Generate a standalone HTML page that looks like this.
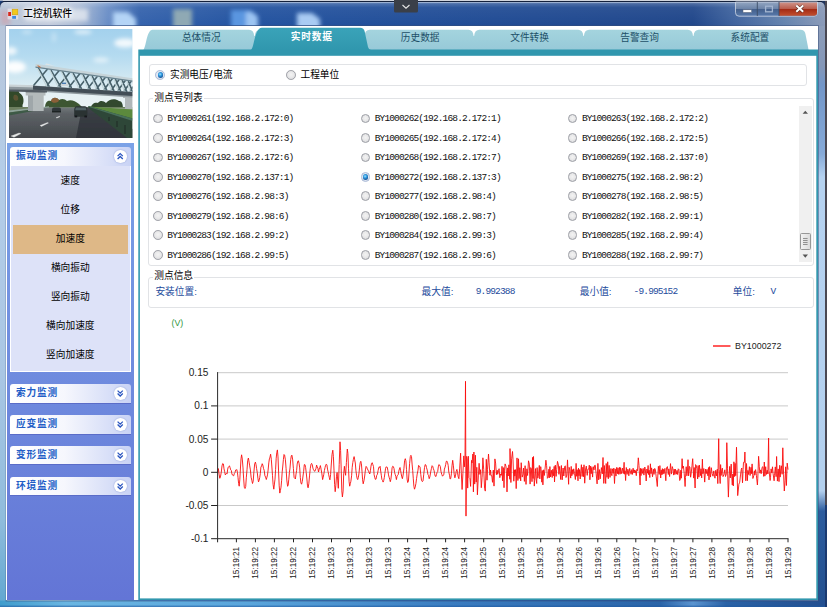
<!DOCTYPE html>
<html lang="zh"><head><meta charset="utf-8"><title>工控机软件</title>
<style>
html,body{margin:0;padding:0}
body{width:827px;height:607px;overflow:hidden;position:relative;background:#3d6aa8;font-family:"Liberation Sans","Noto Sans CJK SC",sans-serif;font-size:9.7px;color:#000}
.abs,.abs-c>*{position:absolute}
div{position:absolute}
#client{left:6px;top:26px;width:812px;height:574px;background:#fff}
#title{left:23.3px;top:7.2px;font-size:9.75px;line-height:13px;color:#000;font-family:"Liberation Sans","Noto Sans CJK SC",sans-serif;font-weight:500;white-space:nowrap;text-shadow:0 0 3px #fff,0 0 5px #fff,0 0 7px #fff}
#side{left:.5px;top:117.4px;width:127.5px;height:456.6px;background:linear-gradient(#7ba2e7,#6375d6)}
.gh{font-family:"Liberation Sans","Noto Sans CJK SC",sans-serif;left:3.3px;width:121px;height:18.6px;border-radius:3px 3px 0 0;background:linear-gradient(90deg,#fff 0%,#f6f7fd 45%,#c9d3f5 100%);color:#215dc6;font-weight:bold;letter-spacing:.8px;line-height:18.5px;text-indent:6.3px;box-sizing:border-box;white-space:nowrap}
.gb{left:3.3px;width:121px;background:#dde2f8;box-sizing:border-box;border:1px solid #fff;border-top:none}
.it{left:0;width:119px;text-align:center;line-height:12px;height:12px;white-space:nowrap}
.chev{right:4.2px;top:3.2px;width:12.4px;height:12.4px;border-radius:50%;background:#fff;box-shadow:0 0 1.5px #7d90d0}
.chev svg{position:absolute;left:0;top:0}
.rd{width:9.8px;height:9.8px;border-radius:50%;box-sizing:border-box;border:1px solid #9c9ea5;background:radial-gradient(circle at 50% 45%,#f3f3f3 0%,#e9e9ea 45%,#d2d3d6 100%)}
.rd.on{border-color:#a9b9d6;background:radial-gradient(circle at 50% 45%,#e6eef8 0%,#dfe6f2 60%,#cfd8ea 100%)}
.rd.on::after{content:"";position:absolute;left:1.2px;top:1.2px;width:5.4px;height:5.4px;border-radius:50%;background:radial-gradient(circle at 42% 38%,#9fe0fb 0%,#2f9ae0 35%,#1a62a8 65%,#163f78 100%)}
.rl{font-family:"Liberation Mono","WenQuanYi Zen Hei",monospace;font-size:9.5px;letter-spacing:-.85px;line-height:12px;height:12px;white-space:pre;color:#111}
.tx{line-height:12px;height:12px;white-space:nowrap}
.gbx{border:1px solid #e1e3e6;border-radius:3px;box-sizing:border-box}
.lbl{background:#fff;line-height:11px;height:11px;padding:0 1px;white-space:nowrap}
.bl{color:#1d4b9c}
.num{font-family:"Liberation Mono",monospace;font-size:9.5px;letter-spacing:-.85px}
.tab{line-height:12px;height:12px;width:60px;text-align:center;color:#1d5068;white-space:nowrap}
</style></head><body>
<svg style="position:absolute;left:0;top:0" width="827" height="607" viewBox="0 0 827 607">
<defs>
<linearGradient id="tb" x1="0" x2="1" y1="0" y2="0">
<stop offset="0" stop-color="#b4c2d6"/><stop offset=".06" stop-color="#c3ccdc"/><stop offset=".095" stop-color="#a9bad4"/><stop offset=".13" stop-color="#6a8ec6"/><stop offset=".17" stop-color="#3462ac"/><stop offset=".3" stop-color="#2353a0"/><stop offset=".6" stop-color="#204b94"/><stop offset=".84" stop-color="#20468a"/><stop offset=".89" stop-color="#3f639e"/><stop offset=".95" stop-color="#6483ae"/><stop offset="1" stop-color="#8a9ab8"/>
</linearGradient>
<linearGradient id="tbv" x1="0" x2="0" y1="0" y2="1"><stop offset="0" stop-color="#fff" stop-opacity=".28"/><stop offset=".25" stop-color="#fff" stop-opacity=".06"/><stop offset="1" stop-color="#fff" stop-opacity="0"/></linearGradient>
<linearGradient id="lf" x1="0" x2="0" y1="0" y2="1">
<stop offset="0" stop-color="#b8c6da"/><stop offset=".25" stop-color="#b4cde8"/><stop offset=".6" stop-color="#a9c6e4"/><stop offset=".85" stop-color="#8fbcdc"/><stop offset="1" stop-color="#5fa6d0"/>
</linearGradient>
<linearGradient id="rf" x1="0" x2="0" y1="0" y2="1">
<stop offset="0" stop-color="#8d9db9"/><stop offset=".07" stop-color="#8497b8"/><stop offset=".1" stop-color="#7296c8"/><stop offset=".22" stop-color="#86aad8"/><stop offset=".26" stop-color="#b5d2f0"/><stop offset=".8" stop-color="#b3d0ee"/><stop offset=".835" stop-color="#2c5c9e"/><stop offset="1" stop-color="#23508f"/>
</linearGradient>
<linearGradient id="bf" x1="0" x2="1" y1="0" y2="0">
<stop offset="0" stop-color="#3f9ccc"/><stop offset=".08" stop-color="#6ab6e2"/><stop offset=".3" stop-color="#5aa6dc"/><stop offset=".55" stop-color="#3a7cc0"/><stop offset=".8" stop-color="#2a64a8"/><stop offset=".84" stop-color="#5a94d0"/><stop offset=".88" stop-color="#2a62a6"/><stop offset="1" stop-color="#234f90"/>
</linearGradient>
<filter id="b3" x="-50%" y="-50%" width="200%" height="200%"><feGaussianBlur stdDeviation="2"/></filter>
<clipPath id="tbc"><rect x="0" y="2" width="827" height="23.5"/></clipPath>
</defs>
<rect x="0" y="0" width="827" height="607" fill="#20345c"/>
<path d="M0 607V8Q0 1.5 7 1.5H818Q825 1.5 825 8V607Z" fill="url(#tb)"/>
<path d="M0 26V8Q0 1.5 7 1.5H818Q825 1.5 825 8V26Z" fill="url(#tbv)"/>
<rect x="0" y="26" width="6.4" height="581" fill="url(#lf)"/>
<rect x="818" y="26" width="7" height="581" fill="url(#rf)"/>
<rect x="0" y="600.6" width="825" height="6.4" fill="url(#bf)"/>
<rect x="0" y="605.6" width="825" height="1.4" fill="#1f5aa0" opacity=".55"/>
<rect x="825" y="0" width="2" height="505" fill="#4a4852"/>
<rect x="825" y="505" width="2" height="102" fill="#1b3a70"/>
<g filter="url(#b3)" clip-path="url(#tbc)">
<path d="M113 30V12H128L136 19V30Z" fill="#b4d4f6"/>
<rect x="173" y="9" width="19" height="22" fill="#8fa9b4"/>
<path d="M231 30V10H250L258 16V30Z" fill="#5a96e0"/>
<path d="M246 30V12H252L258 17V30Z" fill="#9cc4f2"/>
<path d="M297 30V13H312L320 19V30Z" fill="#a9cbf3"/>
<rect x="26" y="9" width="62" height="12" fill="#e4e8f0" opacity=".8"/>
<rect x="1" y="11" width="9" height="14" fill="#d49aa4" opacity=".55"/>
</g>
<path d="M7 2.6H818" stroke="#dfe8f4" stroke-width="1" opacity=".55"/>
<path d="M3 1.3H822" stroke="#14213c" stroke-width="1.2"/>
<rect x="0" y="0" width="827" height=".8" fill="#fff"/>
<path d="M0 .8H3Q.8 1.8 0 4.5Z" fill="#1d3f7a"/>
<rect x="6.1" y="25.6" width="812.3" height="575.4" fill="none" stroke="#3a4f7a" stroke-width=".9" opacity=".6"/>
<!-- top dropdown notch -->
<path d="M394 0H418V11Q418 12.5 416.5 12.5H395.5Q394 12.5 394 11Z" fill="#3a3f48"/>
<path d="M402.5 5L406 8.2L409.5 5" fill="none" stroke="#e8e8e8" stroke-width="1.1"/>
<!-- caption buttons -->
<g>
<defs><linearGradient id="cb" x1="0" x2="0" y1="0" y2="1"><stop offset="0" stop-color="#93a6c2"/><stop offset=".48" stop-color="#6c84a8"/><stop offset=".52" stop-color="#44608c"/><stop offset="1" stop-color="#587aac"/></linearGradient>
<linearGradient id="cr" x1="0" x2="0" y1="0" y2="1"><stop offset="0" stop-color="#cf9388"/><stop offset=".48" stop-color="#b95c4c"/><stop offset=".52" stop-color="#a32b15"/><stop offset="1" stop-color="#c25030"/></linearGradient></defs>
<path d="M735.5 2H817.5V12.7Q817.5 16.2 814 16.2H739Q735.5 16.2 735.5 12.7Z" fill="url(#cb)" stroke="#cfd8e6" stroke-width=".8"/>
<path d="M779 2.4H817V12.7Q817 15.7 814 15.7H779Z" fill="url(#cr)"/>
<path d="M757.3 2V16M779 2V16" stroke="#3c4d68" stroke-width=".9"/>
<rect x="743" y="9.8" width="8.6" height="2.6" fill="#fff" stroke="#5a6478" stroke-width=".5"/>
<rect x="765.6" y="6.2" width="6.8" height="5.6" fill="none" stroke="#a3b5d0" stroke-width="1.3"/>
<path d="M796.3 5.6L803.2 11.8M803.2 5.6L796.3 11.8" stroke="#5a2a20" stroke-width="3.2"/>
<path d="M796.3 5.6L803.2 11.8M803.2 5.6L796.3 11.8" stroke="#fff" stroke-width="2"/>
</g>
<!-- app icon -->
<g>
<rect x="7.6" y="8.6" width="10.6" height="10.8" fill="#e8e4ea" opacity=".75"/>
<rect x="8.2" y="12" width="2.8" height="4" fill="#d8281c"/>
<rect x="12.2" y="9.2" width="5.6" height="5.6" fill="#f2c81c" stroke="#caa010" stroke-width=".6"/>
<rect x="12.2" y="16" width="3.8" height="2.8" fill="#3f8ae0"/>
</g>
</svg>
<div id="title">工控机软件</div>
<div id="client">
<svg style="position:absolute;left:3px;top:3.4px" width="123.6" height="108.9" viewBox="0 0 123.6 108.9">
<defs>
<linearGradient id="sky" x1="0" x2="0" y1="0" y2="1"><stop offset="0" stop-color="#a3d1ed"/><stop offset=".25" stop-color="#b5dbf0"/><stop offset=".45" stop-color="#d1e8f2"/><stop offset=".6" stop-color="#e6f1f4"/><stop offset="1" stop-color="#eef4f4"/></linearGradient>
<linearGradient id="road" x1="0" x2="0" y1="0" y2="1"><stop offset="0" stop-color="#70777a"/><stop offset=".2" stop-color="#5d6266"/><stop offset="1" stop-color="#45494e"/></linearGradient>
<filter id="pb"><feGaussianBlur stdDeviation="2.2"/></filter>
<filter id="ps"><feGaussianBlur stdDeviation=".5"/></filter>
<clipPath id="pc"><rect x="0" y="0" width="123.6" height="108.9"/></clipPath>
</defs>
<g clip-path="url(#pc)">
<rect width="123.6" height="108.9" fill="url(#sky)"/>
<g filter="url(#pb)" fill="#fff">
<ellipse cx="6" cy="38" rx="11" ry="6" opacity=".95"/>
<ellipse cx="2" cy="22" rx="6" ry="4" opacity=".8"/>
<ellipse cx="116" cy="14" rx="11" ry="4.5" opacity=".85"/>
<ellipse cx="92" cy="31" rx="8" ry="2.5" opacity=".6"/>
<ellipse cx="74" cy="3" rx="9" ry="2" opacity=".7"/>
<ellipse cx="45" cy="8" rx="2" ry="5" opacity=".35"/>
<ellipse cx="18" cy="3" rx="5" ry="1.5" opacity=".5"/>
</g>
<g filter="url(#ps)">
<path d="M36 79C36 72 40 71 42 72C43 68 48 68 50 71C53 69 56 70 58 72C62 70 66 72 70 75L74 79Z" fill="#3d5733"/>
<path d="M42 72C43 68 48 68 50 71C50 74 44 75 42 72Z" fill="#a4623a" opacity=".75"/>
<path d="M82 79C82 75 86 73 89 74C91 71 95 72 97 74C100 70 106 69 110 72C113 72 114 75 114 80H82Z" fill="#31492f"/>
<path d="M0 61C4 57.5 9 59.5 10.5 64C14.5 66 15.5 72 13.5 76C14.5 80 10 84 0 84Z" fill="#314a2b"/>
<path d="M5 66C8 65 10 68 9 71C6 73 3 70 5 66Z" fill="#7a5a38" opacity=".6"/>
<path d="M0 78H123.6V90H0Z" fill="#6d8060"/>
<path d="M80 78.6L123.6 79.4V82L90 79.6Z" fill="#a3aaa3"/>
<path d="M79.4 77.4L123.6 80.4V91L88 80Z" fill="#5b8a3c"/>
<path d="M0 84L40 78.5H79.4L123.6 100V108.9H0Z" fill="url(#road)"/>
<path d="M73 78.5H79.4L123.6 100V108.9H67Z" fill="#23262e" opacity=".62"/>
<path d="M79.4 77L123.6 89.4V108.9H118L79.4 79Z" fill="#2f4638"/>
<path d="M79.4 77L123.6 89.4V92L79.4 77.8Z" fill="#47705a"/>
<path d="M100 88V92M108 92V98M116 96V105" stroke="#1f2e28" stroke-width="1.2"/>
<path d="M0 81.5L40 77.2V78.4L0 83.6Z" fill="#8ea39a"/>
<path d="M0 83.6L30 79.6V81L0 86.4Z" fill="#3e5a46"/>
<path d="M31 96.5L38.5 93.5L39.5 94L32.5 97.5Z M47 88.6L50.5 87.3L51 87.7L47.8 89.1Z M2 107L10 104L12 104.6L5 108.3Z" fill="#e6e8e8" stroke="#e6e8e8" stroke-width=".3"/>
<path d="M16.7 62H36.5V66.6H34.7V82H19V66.6H16.7Z" fill="#b3babb"/>
<path d="M19 66.6H24V82H19Z" fill="#9fa7aa"/>
<path d="M16.7 61.5H36.5V63.4H16.7Z" fill="#656e74"/>
<path d="M114 65H123.6V80H116V69H114Z" fill="#b0b7b9"/>
<path d="M114 65H123.6V67H114Z" fill="#5c656b"/>
<path d="M0 56.2L28 56.8L123.6 63V68.4L28 62.4L0 61.6Z" fill="#8f999e"/>
<path d="M0 55.6L28 56.2V58.4L0 57.8Z" fill="#c9d2d5"/>
<path d="M24 56.8L123.6 63V67L24 60.8Z" fill="#434e56"/>
<path d="M0 60.4L28 60.8L38 61.6V63.6L0 62.6Z" fill="#535c64"/>
<path d="M25.0 56.1L39.0 39.4M29.0 38.4L40.0 57.1M37.5 56.9L50.6 41.1M41.5 40.3L51.6 57.8M49.1 57.7L61.3 42.7M53.1 42.0L62.3 58.5M59.8 58.4L71.2 44.2M63.8 43.6L72.2 59.2M69.7 59.0L80.3 45.5M73.7 45.1L81.3 59.8M78.8 59.6L88.8 46.8M82.8 46.4L89.8 60.4M87.3 60.2L96.6 48.0M91.3 47.7L97.6 60.9M95.1 60.7L103.8 49.1M99.1 48.8L104.8 61.4M102.3 61.2L110.5 50.1M106.3 49.9L111.5 61.8M109.0 61.6L116.7 51.0M113.0 50.9L117.7 62.2M115.2 62.0L122.5 51.8M119.2 51.8L123.5 62.6M121.0 62.4L127.8 52.6M125.0 52.7L128.8 62.9M126.3 62.8L132.7 53.4M130.3 53.5L133.7 63.3" fill="none" stroke="#48626c" stroke-width="1.6" stroke-linecap="round"/>
<path d="M27.5 37.7L37.5 56.9M40.0 39.5L49.1 57.7M51.6 41.3L59.8 58.4M62.3 42.9L69.7 59.0M72.2 44.3L78.8 59.6M81.3 45.7L87.3 60.2M89.8 47.0L95.1 60.7M97.6 48.1L102.3 61.2M104.8 49.2L109.0 61.6M111.5 50.2L115.2 62.0M117.7 51.1L121.0 62.4M123.5 52.0L126.3 62.8M128.8 52.8L131.2 63.1" fill="none" stroke="#c4d6da" stroke-width="1.2" stroke-linecap="round"/>
<path d="M26.5 34.8L123.6 49.2V52.6L26.5 38.4Z" fill="#c6d4d9"/>
<path d="M26.5 37.4L123.6 51.6V52.8L26.5 38.8Z" fill="#67828e"/>
<path d="M36 35.4L46 37L37.5 34.6Z" fill="#e2e4e4"/>
<path d="M28.6 36.6L31.6 38.4" stroke="#c86a3a" stroke-width="1.1"/>
<rect x="52" y="54.6" width="7" height="2.4" fill="#cfd5d9"/>
<rect x="53" y="53.6" width="4" height="1.4" fill="#4a7ab0"/>
<path d="M65.2 81Q65.2 77.4 67.8 77.2H75.8Q78.2 77.4 78.4 81V86.4Q78.4 87.8 77 87.8H66.6Q65.2 87.8 65.2 86.4Z" fill="#2a3233"/>
<path d="M66.8 78.4H76.8L77.4 81.2H66.2Z" fill="#4f6164"/>
<rect x="65.6" y="86.6" width="2.6" height="1.8" fill="#13171a"/><rect x="75.4" y="86.6" width="2.6" height="1.8" fill="#13171a"/>
<path d="M43 80.4Q43 78.6 45 78.6H50Q52 78.6 52 80.4V82.6H43Z" fill="#2e3638"/>
<rect x="43" y="82.2" width="9" height="1.2" fill="#15191b"/>
</g>
</g>
</svg>
<div id="side">
<div class="gh" style="top:3.6px">振动监测<div class="chev"><svg width="12.4" height="12.4" viewBox="0 0 12.4 12.4"><path d="M3.6 6.1L6.2 3.6L8.8 6.1M3.6 9L6.2 6.5L8.8 9" fill="none" stroke="#2a55c0" stroke-width="1.3"/></svg></div></div>
<div class="gb" style="top:22.2px;height:206.0px">
<div style="left:2px;top:59.2px;width:115px;height:28.8px;background:#deb887"></div>
<div class="it" style="top:9.2px">速度</div>
<div class="it" style="top:38.3px">位移</div>
<div class="it" style="top:67.3px">加速度</div>
<div class="it" style="top:96.4px">横向振动</div>
<div class="it" style="top:125.5px">竖向振动</div>
<div class="it" style="top:154.5px">横向加速度</div>
<div class="it" style="top:183.6px">竖向加速度</div>
</div>
<div class="gh" style="top:240.8px;border-radius:3px 3px 0 0;box-shadow:0 1px 0 #5a6cc8">索力监测<div class="chev"><svg width="12.4" height="12.4" viewBox="0 0 12.4 12.4"><path d="M3.6 3.6L6.2 6.1L8.8 3.6M3.6 6.5L6.2 9L8.8 6.5" fill="none" stroke="#2a55c0" stroke-width="1.3"/></svg></div></div>
<div class="gh" style="top:271.7px;border-radius:3px 3px 0 0;box-shadow:0 1px 0 #5a6cc8">应变监测<div class="chev"><svg width="12.4" height="12.4" viewBox="0 0 12.4 12.4"><path d="M3.6 3.6L6.2 6.1L8.8 3.6M3.6 6.5L6.2 9L8.8 6.5" fill="none" stroke="#2a55c0" stroke-width="1.3"/></svg></div></div>
<div class="gh" style="top:302.5px;border-radius:3px 3px 0 0;box-shadow:0 1px 0 #5a6cc8">变形监测<div class="chev"><svg width="12.4" height="12.4" viewBox="0 0 12.4 12.4"><path d="M3.6 3.6L6.2 6.1L8.8 3.6M3.6 6.5L6.2 9L8.8 6.5" fill="none" stroke="#2a55c0" stroke-width="1.3"/></svg></div></div>
<div class="gh" style="top:333.4px;border-radius:3px 3px 0 0;box-shadow:0 1px 0 #5a6cc8">环境监测<div class="chev"><svg width="12.4" height="12.4" viewBox="0 0 12.4 12.4"><path d="M3.6 3.6L6.2 6.1L8.8 3.6M3.6 6.5L6.2 9L8.8 6.5" fill="none" stroke="#2a55c0" stroke-width="1.3"/></svg></div></div>
</div>
<svg style="position:absolute;left:0;top:0" width="812" height="574" viewBox="6 26 812 574">
<defs><linearGradient id="ti" x1="0" x2="0" y1="0" y2="1"><stop offset="0" stop-color="#a4d4de"/><stop offset="1" stop-color="#97c9d8"/></linearGradient><linearGradient id="ta" x1="0" x2="0" y1="0" y2="1"><stop offset="0" stop-color="#3aa3b9"/><stop offset="1" stop-color="#3097ae"/></linearGradient></defs>
<path d="M143.2 50.0 C146.2 48.0 146.5 29.8 152.5 29.8 H249.0 Q253.7 29.8 254.2 36.0 L254.8 36.0 Q255.3 29.8 260.0 29.8 H358.7 Q363.4 29.8 363.9 36.0 L364.4 36.0 Q365.0 29.8 369.7 29.8 H468.4 Q473.1 29.8 473.6 36.0 L474.1 36.0 Q474.7 29.8 479.4 29.8 H578.1 Q582.8 29.8 583.4 36.0 L583.9 36.0 Q584.4 29.8 589.1 29.8 H687.8 Q692.5 29.8 693.0 36.0 L693.5 36.0 Q694.1 29.8 698.8 29.8 H800.5 Q804.6 29.8 805.4 33.8 L808.6 50.0 Z" fill="url(#ti)"/>
<rect x="138.3" y="49.5" width="680" height="551" fill="#3197ae"/>
<rect x="139.9" y="55.8" width="676.4" height="542.6" fill="#fff"/>
<path d="M250.5 50 C254.5 49 254 27.8 262 27.8 H360 Q364 27.8 364.8 32 L368 47 Q368.6 49.6 371 50 Z" fill="url(#ta)"/>
</svg>
<div class="tab" style="left:165.3px;top:6.4px">总体情况</div>
<div class="tab" style="left:275.7px;top:4.9px;color:#fff;font-weight:bold;letter-spacing:.8px;font-family:Liberation Sans,Noto Sans CJK SC,sans-serif">实时数据</div>
<div class="tab" style="left:384.2px;top:6.4px">历史数据</div>
<div class="tab" style="left:493.6px;top:6.4px">文件转换</div>
<div class="tab" style="left:603.6px;top:6.4px">告警查询</div>
<div class="tab" style="left:713.9px;top:6.4px">系统配置</div>
<div class="gbx" style="left:142.6px;top:38.0px;width:658.4px;height:21.7px"></div>
<div class="rd on" style="left:149.4px;top:44.3px"></div>
<div class="tx" style="left:164.0px;top:43.3px">实测电压<span style="padding:0 .6px;font-size:11.5px;line-height:1px">/</span>电流</div>
<div class="rd" style="left:280.0px;top:44.3px"></div>
<div class="tx" style="left:294.5px;top:43.3px">工程单位</div>
<div class="gbx" style="left:142.2px;top:72.0px;width:666.1px;height:167.7px"></div>
<div class="lbl" style="left:147.3px;top:65.8px">测点号列表</div>
<div class="rd" style="left:147.1px;top:87.6px"></div>
<div class="rl" style="left:161.3px;top:87.3px">BY1000261(192.168.2.172:0)</div>
<div class="rd" style="left:354.5px;top:87.6px"></div>
<div class="rl" style="left:368.7px;top:87.3px">BY1000262(192.168.2.172:1)</div>
<div class="rd" style="left:561.7px;top:87.6px"></div>
<div class="rl" style="left:575.9px;top:87.3px">BY1000263(192.168.2.172:2)</div>
<div class="rd" style="left:147.1px;top:107.1px"></div>
<div class="rl" style="left:161.3px;top:106.8px">BY1000264(192.168.2.172:3)</div>
<div class="rd" style="left:354.5px;top:107.1px"></div>
<div class="rl" style="left:368.7px;top:106.8px">BY1000265(192.168.2.172:4)</div>
<div class="rd" style="left:561.7px;top:107.1px"></div>
<div class="rl" style="left:575.9px;top:106.8px">BY1000266(192.168.2.172:5)</div>
<div class="rd" style="left:147.1px;top:126.5px"></div>
<div class="rl" style="left:161.3px;top:126.2px">BY1000267(192.168.2.172:6)</div>
<div class="rd" style="left:354.5px;top:126.5px"></div>
<div class="rl" style="left:368.7px;top:126.2px">BY1000268(192.168.2.172:7)</div>
<div class="rd" style="left:561.7px;top:126.5px"></div>
<div class="rl" style="left:575.9px;top:126.2px">BY1000269(192.168.2.137:0)</div>
<div class="rd" style="left:147.1px;top:146.0px"></div>
<div class="rl" style="left:161.3px;top:145.7px">BY1000270(192.168.2.137:1)</div>
<div class="rd on" style="left:354.5px;top:146.0px"></div>
<div class="rl" style="left:368.7px;top:145.7px">BY1000272(192.168.2.137:3)</div>
<div class="rd" style="left:561.7px;top:146.0px"></div>
<div class="rl" style="left:575.9px;top:145.7px">BY1000275(192.168.2.98:2)</div>
<div class="rd" style="left:147.1px;top:165.4px"></div>
<div class="rl" style="left:161.3px;top:165.2px">BY1000276(192.168.2.98:3)</div>
<div class="rd" style="left:354.5px;top:165.4px"></div>
<div class="rl" style="left:368.7px;top:165.2px">BY1000277(192.168.2.98:4)</div>
<div class="rd" style="left:561.7px;top:165.4px"></div>
<div class="rl" style="left:575.9px;top:165.2px">BY1000278(192.168.2.98:5)</div>
<div class="rd" style="left:147.1px;top:184.9px"></div>
<div class="rl" style="left:161.3px;top:184.6px">BY1000279(192.168.2.98:6)</div>
<div class="rd" style="left:354.5px;top:184.9px"></div>
<div class="rl" style="left:368.7px;top:184.6px">BY1000280(192.168.2.98:7)</div>
<div class="rd" style="left:561.7px;top:184.9px"></div>
<div class="rl" style="left:575.9px;top:184.6px">BY1000282(192.168.2.99:1)</div>
<div class="rd" style="left:147.1px;top:204.3px"></div>
<div class="rl" style="left:161.3px;top:204.1px">BY1000283(192.168.2.99:2)</div>
<div class="rd" style="left:354.5px;top:204.3px"></div>
<div class="rl" style="left:368.7px;top:204.1px">BY1000284(192.168.2.99:3)</div>
<div class="rd" style="left:561.7px;top:204.3px"></div>
<div class="rl" style="left:575.9px;top:204.1px">BY1000285(192.168.2.99:4)</div>
<div class="rd" style="left:147.1px;top:223.8px"></div>
<div class="rl" style="left:161.3px;top:223.5px">BY1000286(192.168.2.99:5)</div>
<div class="rd" style="left:354.5px;top:223.8px"></div>
<div class="rl" style="left:368.7px;top:223.5px">BY1000287(192.168.2.99:6)</div>
<div class="rd" style="left:561.7px;top:223.8px"></div>
<div class="rl" style="left:575.9px;top:223.5px">BY1000288(192.168.2.99:7)</div>
<div style="left:793.4px;top:80.0px;width:12.6px;height:156px;background:#f0f0f0"></div>
<div style="left:793.9px;top:207.3px;width:11.6px;height:16.4px;box-sizing:border-box;border:1px solid #979797;border-radius:1.5px;background:linear-gradient(90deg,#f2f2f2,#dcdcdc)"></div>
<svg style="position:absolute;left:793.4px;top:80.0px" width="12.6" height="156" viewBox="0 0 12.6 156"><path d="M3.6 7.8L6.3 4.6L9 7.8Z M3.6 148.6L6.3 151.8L9 148.6Z" fill="#555"/><path d="M4 132.5H8.6M4 134.5H8.6M4 136.5H8.6M4 138.5H8.6" stroke="#777" stroke-width=".8"/></svg>
<div class="gbx" style="left:142.2px;top:250.6px;width:665.8px;height:31.0px"></div>
<div class="lbl" style="left:147.3px;top:243.7px">测点信息</div>
<div class="tx bl" style="left:149.4px;top:259.6px">安装位置:</div>
<div class="tx bl" style="left:415.6px;top:259.6px">最大值:</div>
<div class="tx bl num" style="left:469.7px;top:259.9px">9.992388</div>
<div class="tx bl" style="left:573.8px;top:259.6px">最小值:</div>
<div class="tx bl num" style="left:627.6px;top:259.9px">-9.995152</div>
<div class="tx bl" style="left:726.8px;top:259.6px">单位:</div>
<div class="tx bl num" style="left:764.4px;top:259.9px">V</div>
<svg style="position:absolute;left:0;top:0" width="812" height="574" viewBox="6 26 812 574" font-family="Liberation Sans, sans-serif">
<path d="M217.6 372.7H788.0" stroke="#c9c9c9" stroke-width="1"/>
<path d="M217.6 405.9H788.0" stroke="#c9c9c9" stroke-width="1"/>
<path d="M217.6 439.1H788.0" stroke="#c9c9c9" stroke-width="1"/>
<path d="M217.6 472.3H788.0" stroke="#c9c9c9" stroke-width="1"/>
<path d="M217.6 505.5H788.0" stroke="#c9c9c9" stroke-width="1"/>
<path d="M217.7 472.7 L218.0 471.0 L218.4 468.6 L219.1 474.2 L219.8 478.3 L220.6 476.0 L221.3 472.0 L222.0 465.9 L222.7 463.5 L223.4 464.0 L224.0 468.8 L224.6 471.5 L225.3 474.9 L225.9 473.8 L226.5 473.6 L227.1 473.9 L227.7 469.1 L228.3 467.0 L228.9 466.4 L229.5 465.9 L230.1 467.8 L230.7 469.8 L231.3 470.4 L231.9 473.9 L232.5 475.1 L233.1 475.5 L233.7 475.8 L234.3 473.6 L235.0 472.5 L235.6 470.1 L236.2 470.1 L236.8 469.5 L237.4 472.2 L238.0 477.3 L238.6 483.4 L239.2 486.2 L239.8 479.7 L240.4 469.0 L241.0 458.8 L241.6 454.8 L242.3 459.1 L243.0 467.9 L243.6 478.1 L244.3 487.3 L245.0 488.5 L245.7 486.6 L246.3 477.8 L247.0 469.8 L247.7 460.5 L248.4 458.0 L249.1 462.1 L249.7 465.9 L250.4 469.9 L251.1 477.2 L251.8 480.2 L252.5 483.5 L253.2 481.2 L253.9 471.9 L254.7 463.8 L255.4 462.1 L256.0 464.5 L256.6 468.6 L257.3 472.7 L257.9 478.2 L258.5 481.9 L259.1 480.4 L259.7 477.7 L260.3 473.6 L260.9 467.2 L261.6 465.9 L262.2 463.7 L262.8 465.0 L263.5 468.4 L264.2 470.4 L264.9 475.8 L265.6 477.0 L266.3 479.5 L266.9 477.4 L267.5 474.9 L268.1 470.1 L268.8 462.9 L269.4 458.8 L270.0 457.1 L270.6 454.2 L271.3 459.3 L271.9 467.0 L272.5 475.7 L273.1 484.5 L273.8 489.2 L274.4 484.0 L275.0 479.2 L275.6 469.4 L276.2 458.2 L276.8 452.4 L277.4 449.9 L278.0 456.9 L278.6 472.0 L279.2 485.8 L279.8 493.1 L280.4 490.6 L281.0 487.2 L281.6 480.7 L282.2 471.9 L282.8 466.0 L283.4 459.5 L284.0 454.5 L284.6 455.1 L285.4 459.8 L286.1 468.7 L286.8 480.1 L287.6 486.3 L288.2 485.0 L288.8 479.2 L289.4 472.6 L290.0 468.0 L290.7 459.7 L291.3 455.8 L291.9 455.1 L292.6 459.1 L293.4 468.6 L294.1 477.4 L294.8 478.2 L295.4 479.0 L296.0 474.1 L296.6 470.6 L297.2 464.1 L297.8 461.2 L298.4 460.8 L299.1 463.5 L299.7 467.9 L300.3 477.3 L300.9 482.9 L301.6 484.2 L302.3 481.4 L302.9 477.0 L303.6 471.6 L304.3 464.6 L305.0 464.7 L305.6 467.4 L306.2 472.4 L306.9 479.0 L307.5 485.9 L308.1 487.8 L308.8 483.8 L309.6 475.1 L310.3 468.3 L311.0 464.2 L311.6 463.4 L312.3 464.9 L312.9 468.1 L313.5 469.8 L314.2 470.8 L314.8 471.4 L315.4 470.0 L316.0 468.4 L316.6 465.1 L317.2 466.8 L317.9 468.2 L318.5 472.0 L319.2 469.1 L319.8 467.4 L320.4 465.6 L321.2 469.8 L321.9 473.9 L322.6 479.6 L323.2 477.3 L323.8 474.3 L324.4 470.5 L325.0 467.7 L325.6 465.3 L326.2 464.2 L326.9 464.8 L327.5 469.1 L328.1 471.8 L328.7 474.8 L329.3 477.5 L329.9 479.8 L330.6 474.5 L331.3 464.0 L332.0 454.6 L332.8 450.2 L333.4 456.7 L334.0 470.2 L334.6 484.3 L335.2 491.7 L335.8 485.8 L336.5 476.3 L337.1 472.4 L337.7 480.1 L338.3 488.3 L339.2 464.4 L340.0 441.8 L340.6 450.4 L341.2 468.9 L341.8 490.8 L342.4 497.0 L343.1 491.2 L343.7 473.8 L344.4 466.3 L345.0 471.9 L345.6 475.3 L346.4 462.6 L347.3 449.0 L347.9 453.4 L348.5 468.2 L349.1 481.7 L349.7 486.2 L350.3 483.7 L350.9 481.2 L351.6 475.8 L352.2 467.4 L352.8 462.6 L353.4 459.3 L354.1 456.6 L354.7 459.8 L355.3 463.0 L355.9 470.2 L356.5 475.2 L357.1 478.3 L357.7 479.6 L358.3 477.7 L358.9 474.0 L359.6 467.1 L360.2 462.7 L360.8 461.3 L361.4 463.8 L362.0 471.3 L362.6 479.8 L363.2 483.8 L364.0 480.4 L364.7 476.0 L365.4 469.9 L366.1 466.4 L366.8 467.4 L367.4 468.9 L368.0 470.1 L368.6 471.3 L369.2 473.0 L369.8 474.0 L370.4 470.7 L371.0 466.1 L371.6 463.3 L372.2 462.7 L372.8 464.5 L373.5 466.6 L374.1 474.6 L374.7 477.2 L375.3 479.3 L376.0 479.2 L376.7 475.4 L377.4 474.3 L378.1 470.6 L378.8 467.3 L379.4 467.6 L380.1 466.3 L380.7 471.0 L381.3 475.2 L381.9 479.4 L382.5 480.5 L383.1 482.1 L383.7 480.5 L384.3 477.6 L384.9 473.2 L385.5 468.8 L386.1 466.8 L386.7 467.1 L387.3 467.3 L387.9 470.8 L388.5 474.9 L389.1 477.2 L389.7 479.2 L390.3 481.7 L390.9 479.3 L391.5 474.0 L392.1 467.8 L392.8 466.2 L393.4 466.7 L394.0 468.5 L394.6 472.6 L395.2 474.5 L395.8 476.3 L396.4 479.6 L397.0 476.4 L397.6 475.3 L398.2 474.6 L398.8 471.2 L399.4 469.0 L400.0 467.5 L400.6 470.6 L401.2 473.9 L401.8 476.9 L402.4 478.7 L403.1 475.1 L403.9 468.8 L404.6 460.5 L405.3 458.7 L405.9 460.9 L406.5 469.6 L407.1 479.1 L407.7 482.5 L408.4 481.4 L409.0 472.4 L409.6 463.6 L410.3 456.6 L410.9 455.3 L411.5 456.7 L412.1 464.1 L412.7 470.5 L413.3 478.8 L413.9 486.3 L414.5 489.2 L415.2 487.1 L415.9 483.6 L416.6 478.3 L417.2 474.1 L417.9 470.8 L418.6 465.4 L419.3 466.4 L420.0 466.8 L420.8 474.7 L421.5 480.4 L422.3 481.6 L423.0 481.0 L423.7 474.8 L424.5 467.6 L425.2 464.5 L425.9 465.0 L426.5 467.7 L427.2 470.0 L427.9 474.4 L428.5 475.4 L429.2 478.7 L429.9 476.7 L430.7 471.9 L431.4 468.6 L432.1 465.7 L432.8 466.6 L433.4 468.8 L434.0 470.3 L434.6 473.6 L435.2 476.1 L435.9 476.6 L436.5 474.5 L437.1 472.3 L437.7 471.5 L438.3 466.9 L438.9 464.5 L439.6 465.1 L440.3 466.5 L441.0 471.6 L441.8 474.5 L442.5 476.2 L443.2 475.2 L443.8 474.8 L444.4 469.1 L445.1 467.1 L445.7 464.5 L446.3 461.3 L447.0 461.2 L447.6 462.7 L448.2 465.5 L448.8 472.0 L449.5 475.2 L450.1 479.0 L450.7 478.6 L451.4 473.8 L452.0 465.8 L452.7 460.3 L453.4 465.9 L454.2 474.3 L454.9 477.8 L455.6 475.1 L456.2 471.4 L456.9 469.4 L457.5 472.5 L458.2 476.8 L458.9 478.7 L459.7 468.1 L460.6 453.2 L461.3 472.7 L462.1 489.5 L462.9 473.3 L463.8 455.9 L464.3 466.9 L465.0 459.0 L465.5 381.3 L466.0 516.1 L466.6 456.4 L467.2 458.8 L467.7 488.1 L468.3 456.2 L469.0 477.7 L470.0 478.7 L470.6 486.4 L471.5 460.4 L472.0 463.0 L472.9 454.0 L473.4 491.9 L473.9 452.0 L474.7 484.1 L475.4 455.2 L475.8 468.6 L476.2 482.1 L476.8 467.3 L477.4 494.8 L478.4 475.1 L479.1 463.3 L479.9 474.4 L480.6 469.7 L481.3 487.7 L482.1 477.3 L482.9 457.8 L483.7 469.4 L484.6 488.4 L485.3 491.1 L486.3 459.3 L487.0 480.2 L487.5 469.7 L488.5 454.0 L489.1 462.8 L489.9 475.2 L490.5 470.0 L491.1 475.8 L491.8 475.7 L492.5 482.3 L493.3 470.1 L494.0 486.1 L494.9 458.9 L495.6 463.1 L496.4 474.7 L497.2 470.2 L497.7 474.3 L498.6 470.4 L499.1 468.7 L499.8 477.7 L500.6 473.9 L501.5 475.3 L502.0 466.3 L502.5 480.8 L503.3 467.6 L504.0 487.7 L504.5 470.1 L505.1 463.9 L506.0 466.4 L506.5 473.9 L507.0 491.9 L507.7 467.9 L508.2 476.0 L508.9 464.8 L509.8 479.3 L510.0 448.6 L510.9 482.5 L511.6 458.8 L512.5 451.5 L513.0 459.4 L513.8 481.2 L514.4 469.8 L514.8 476.1 L515.6 469.6 L516.2 488.6 L517.0 457.9 L517.9 480.5 L518.5 458.8 L519.1 478.6 L519.8 467.7 L520.7 480.9 L521.2 462.7 L522.2 477.1 L523.0 474.4 L523.5 468.1 L524.4 481.4 L525.1 465.7 L526.0 484.4 L526.9 468.8 L527.6 475.5 L528.5 460.8 L529.3 464.1 L530.1 484.1 L530.7 467.6 L531.4 469.0 L532.0 481.7 L532.5 457.4 L533.1 478.5 L533.5 456.5 L534.3 486.1 L534.6 480.6 L535.5 468.6 L536.0 478.3 L536.7 483.5 L537.1 467.6 L537.8 478.2 L538.6 474.1 L539.3 465.4 L539.8 478.9 L540.4 467.0 L540.9 466.6 L541.8 482.2 L542.3 470.5 L542.9 484.9 L543.6 469.8 L544.3 475.5 L545.0 469.2 L545.9 460.2 L546.6 465.7 L547.4 478.3 L548.2 477.3 L548.9 469.2 L549.3 477.9 L549.9 466.6 L550.5 476.9 L551.3 470.2 L552.2 477.5 L552.8 469.2 L553.6 475.8 L554.2 466.4 L554.5 482.0 L555.3 465.1 L556.1 476.4 L556.7 469.5 L557.5 461.4 L558.4 465.0 L558.9 474.3 L559.7 466.4 L560.7 479.5 L561.4 465.5 L562.2 479.8 L563.1 468.0 L563.8 476.0 L564.7 466.5 L565.3 465.8 L566.0 477.5 L566.8 475.1 L567.5 459.9 L568.6 484.3 L569.1 467.3 L569.8 469.9 L570.7 478.1 L571.2 466.4 L571.8 475.8 L572.6 469.6 L573.0 474.3 L573.7 468.8 L574.5 473.4 L575.4 479.5 L576.1 463.4 L576.7 476.3 L577.2 469.7 L578.0 480.8 L578.5 468.1 L579.0 475.8 L579.6 469.6 L580.2 479.0 L581.4 464.7 L582.1 476.5 L582.9 467.2 L583.5 476.7 L584.0 464.8 L584.7 483.2 L585.6 469.0 L586.3 466.1 L587.2 475.4 L587.9 469.1 L588.9 469.0 L589.3 465.2 L589.9 479.8 L590.7 466.0 L591.2 473.7 L591.8 467.5 L592.6 477.1 L593.2 466.7 L594.0 469.9 L594.6 465.4 L595.3 465.3 L595.6 469.0 L596.2 474.0 L597.1 483.9 L597.9 463.4 L598.7 479.9 L599.4 469.6 L600.2 478.9 L600.8 473.9 L601.4 467.6 L602.3 473.9 L603.0 457.5 L603.8 483.4 L604.3 465.5 L604.9 474.3 L605.7 483.5 L606.2 463.5 L607.0 477.3 L607.7 461.8 L608.3 478.8 L609.1 465.4 L610.0 477.4 L610.9 468.5 L611.3 473.3 L611.9 475.7 L612.3 468.8 L613.2 473.4 L613.8 468.1 L614.5 483.5 L615.2 468.9 L616.0 476.1 L616.7 467.4 L617.5 473.7 L618.0 467.8 L618.7 474.4 L619.6 467.3 L620.1 474.2 L620.6 467.7 L621.5 473.6 L622.5 468.1 L623.3 473.6 L624.1 462.3 L624.6 474.2 L625.1 470.8 L625.6 480.5 L626.3 467.5 L627.1 474.4 L627.8 469.2 L628.3 470.2 L628.8 475.8 L629.7 468.4 L630.2 470.7 L631.1 474.3 L631.8 469.6 L632.5 474.4 L633.1 468.2 L633.9 472.8 L634.4 469.9 L635.1 473.0 L635.6 470.6 L636.3 475.7 L636.8 469.4 L637.5 470.7 L638.3 457.8 L639.0 465.6 L640.1 485.0 L640.5 468.3 L641.0 475.6 L641.7 468.7 L642.5 473.4 L643.2 468.4 L643.9 475.1 L644.8 467.0 L645.4 470.0 L646.2 481.0 L646.9 469.0 L647.5 473.2 L648.1 465.5 L648.6 474.6 L649.1 470.2 L649.8 477.5 L650.4 463.8 L651.0 473.7 L651.6 467.9 L652.5 476.8 L653.4 469.2 L654.0 474.4 L654.7 468.4 L655.3 469.3 L656.2 476.8 L657.3 486.5 L657.9 473.9 L658.4 466.3 L659.2 474.4 L659.9 465.6 L660.7 478.0 L661.2 469.9 L661.9 474.9 L662.4 468.6 L662.9 474.1 L663.5 469.4 L664.0 473.6 L664.9 468.4 L665.8 480.7 L666.5 467.9 L667.4 466.6 L668.3 474.5 L668.8 468.9 L669.6 476.5 L670.5 463.6 L671.4 474.1 L672.3 466.6 L672.8 468.4 L673.7 475.1 L674.2 469.1 L674.9 474.5 L675.4 469.1 L676.3 474.2 L677.0 470.4 L677.6 474.5 L678.3 468.8 L678.9 469.5 L679.7 480.5 L680.3 479.3 L680.8 470.2 L681.3 478.2 L682.1 458.7 L682.6 468.3 L683.4 466.1 L684.2 473.2 L685.1 486.5 L685.5 477.5 L686.2 466.7 L686.9 475.8 L687.5 470.0 L688.0 459.7 L688.6 475.9 L689.4 466.4 L689.9 467.0 L690.6 477.2 L691.1 474.0 L692.0 465.8 L692.7 458.7 L693.7 478.1 L694.2 467.5 L695.1 488.0 L695.6 464.6 L696.1 465.1 L696.9 468.8 L697.6 479.0 L698.1 465.6 L698.9 477.2 L699.4 465.1 L700.4 475.6 L701.0 468.8 L701.7 477.9 L702.4 459.2 L702.9 473.8 L703.8 468.5 L704.7 482.1 L705.5 469.1 L706.2 473.7 L707.0 469.3 L707.9 475.8 L708.5 467.5 L709.0 479.9 L709.6 466.6 L710.5 477.1 L711.3 467.7 L712.1 473.5 L713.0 476.2 L713.8 470.9 L714.5 476.8 L715.0 478.2 L715.7 470.3 L716.4 475.9 L717.3 469.2 L717.8 483.6 L718.7 438.7 L719.2 469.5 L720.2 483.5 L720.6 464.6 L721.1 475.5 L721.9 469.2 L722.4 468.1 L723.0 476.6 L724.0 474.5 L724.8 469.8 L725.5 476.5 L726.3 474.1 L726.8 442.7 L727.5 468.2 L728.4 497.1 L729.1 475.9 L729.7 466.4 L730.3 477.9 L731.2 464.1 L731.7 476.1 L732.3 485.0 L732.8 474.0 L733.3 486.0 L733.9 461.8 L734.6 476.6 L735.1 463.4 L735.7 475.7 L736.5 447.2 L737.2 477.0 L737.7 495.6 L738.9 484.2 L739.7 482.2 L740.5 474.9 L741.3 469.3 L741.8 468.0 L742.5 482.8 L743.1 469.4 L743.5 462.3 L744.4 462.4 L744.9 452.0 L745.8 480.8 L746.5 463.5 L747.4 480.7 L747.9 470.4 L748.6 474.5 L749.4 466.7 L750.1 475.5 L751.0 467.3 L751.6 473.7 L752.1 463.9 L752.9 478.5 L753.8 475.5 L754.4 470.8 L754.8 475.1 L755.6 469.6 L756.4 475.3 L757.4 485.0 L757.8 478.3 L758.6 456.3 L759.3 466.8 L759.9 473.2 L760.5 469.9 L761.2 473.7 L762.1 467.3 L762.9 466.7 L763.7 476.4 L764.3 462.0 L764.9 476.1 L765.7 466.7 L766.3 474.5 L767.2 470.2 L767.9 474.0 L768.6 438.1 L769.0 470.2 L770.1 480.5 L770.5 477.4 L771.1 468.9 L771.8 472.9 L772.5 466.8 L773.1 473.7 L774.1 480.8 L774.5 475.6 L775.3 466.9 L776.1 476.7 L776.6 456.5 L777.4 481.1 L778.2 468.9 L779.0 481.6 L779.7 465.3 L780.2 477.1 L780.9 468.2 L781.4 465.8 L782.1 474.3 L782.8 447.8 L783.6 474.8 L784.3 491.0 L785.1 480.5 L785.7 466.8 L786.4 485.5 L787.2 463.1 L788.0 469.6" fill="none" stroke="#fb0d0d" stroke-width=".9" stroke-linejoin="round"/>
<path d="M217.6 372.1V538.7H788.5" fill="none" stroke="#2a2a2a" stroke-width="1"/>
<path d="M211.1 405.9H217.6" stroke="#222" stroke-width="1"/>
<path d="M211.1 439.1H217.6" stroke="#222" stroke-width="1"/>
<path d="M211.1 472.3H217.6" stroke="#222" stroke-width="1"/>
<path d="M211.1 505.5H217.6" stroke="#222" stroke-width="1"/>
<path d="M211.1 538.7H217.6" stroke="#222" stroke-width="1"/>
<text x="208.4" y="376.2" font-size="10.1" text-anchor="end" fill="#222">0.15</text>
<text x="208.4" y="409.4" font-size="10.1" text-anchor="end" fill="#222">0.1</text>
<text x="208.4" y="442.6" font-size="10.1" text-anchor="end" fill="#222">0.05</text>
<text x="208.4" y="475.8" font-size="10.1" text-anchor="end" fill="#222">0</text>
<text x="208.4" y="509.0" font-size="10.1" text-anchor="end" fill="#222">-0.05</text>
<text x="208.4" y="542.2" font-size="10.1" text-anchor="end" fill="#222">-0.1</text>
<path d="M236.4 538.7V542.3" stroke="#222" stroke-width="1"/>
<text transform="translate(239.1 578.7) rotate(-90)" font-size="8.2" fill="#222">15:19:21</text>
<path d="M255.4 538.7V542.3" stroke="#222" stroke-width="1"/>
<text transform="translate(258.1 578.7) rotate(-90)" font-size="8.2" fill="#222">15:19:22</text>
<path d="M274.4 538.7V542.3" stroke="#222" stroke-width="1"/>
<text transform="translate(277.1 578.7) rotate(-90)" font-size="8.2" fill="#222">15:19:22</text>
<path d="M293.5 538.7V542.3" stroke="#222" stroke-width="1"/>
<text transform="translate(296.2 578.7) rotate(-90)" font-size="8.2" fill="#222">15:19:22</text>
<path d="M312.5 538.7V542.3" stroke="#222" stroke-width="1"/>
<text transform="translate(315.2 578.7) rotate(-90)" font-size="8.2" fill="#222">15:19:22</text>
<path d="M331.5 538.7V542.3" stroke="#222" stroke-width="1"/>
<text transform="translate(334.2 578.7) rotate(-90)" font-size="8.2" fill="#222">15:19:23</text>
<path d="M350.5 538.7V542.3" stroke="#222" stroke-width="1"/>
<text transform="translate(353.2 578.7) rotate(-90)" font-size="8.2" fill="#222">15:19:23</text>
<path d="M369.5 538.7V542.3" stroke="#222" stroke-width="1"/>
<text transform="translate(372.2 578.7) rotate(-90)" font-size="8.2" fill="#222">15:19:23</text>
<path d="M388.6 538.7V542.3" stroke="#222" stroke-width="1"/>
<text transform="translate(391.3 578.7) rotate(-90)" font-size="8.2" fill="#222">15:19:23</text>
<path d="M407.6 538.7V542.3" stroke="#222" stroke-width="1"/>
<text transform="translate(410.3 578.7) rotate(-90)" font-size="8.2" fill="#222">15:19:24</text>
<path d="M426.6 538.7V542.3" stroke="#222" stroke-width="1"/>
<text transform="translate(429.3 578.7) rotate(-90)" font-size="8.2" fill="#222">15:19:24</text>
<path d="M445.6 538.7V542.3" stroke="#222" stroke-width="1"/>
<text transform="translate(448.3 578.7) rotate(-90)" font-size="8.2" fill="#222">15:19:24</text>
<path d="M464.6 538.7V542.3" stroke="#222" stroke-width="1"/>
<text transform="translate(467.3 578.7) rotate(-90)" font-size="8.2" fill="#222">15:19:24</text>
<path d="M483.7 538.7V542.3" stroke="#222" stroke-width="1"/>
<text transform="translate(486.4 578.7) rotate(-90)" font-size="8.2" fill="#222">15:19:25</text>
<path d="M502.7 538.7V542.3" stroke="#222" stroke-width="1"/>
<text transform="translate(505.4 578.7) rotate(-90)" font-size="8.2" fill="#222">15:19:25</text>
<path d="M521.7 538.7V542.3" stroke="#222" stroke-width="1"/>
<text transform="translate(524.4 578.7) rotate(-90)" font-size="8.2" fill="#222">15:19:25</text>
<path d="M540.7 538.7V542.3" stroke="#222" stroke-width="1"/>
<text transform="translate(543.4 578.7) rotate(-90)" font-size="8.2" fill="#222">15:19:25</text>
<path d="M559.8 538.7V542.3" stroke="#222" stroke-width="1"/>
<text transform="translate(562.5 578.7) rotate(-90)" font-size="8.2" fill="#222">15:19:26</text>
<path d="M578.8 538.7V542.3" stroke="#222" stroke-width="1"/>
<text transform="translate(581.5 578.7) rotate(-90)" font-size="8.2" fill="#222">15:19:26</text>
<path d="M597.8 538.7V542.3" stroke="#222" stroke-width="1"/>
<text transform="translate(600.5 578.7) rotate(-90)" font-size="8.2" fill="#222">15:19:26</text>
<path d="M616.8 538.7V542.3" stroke="#222" stroke-width="1"/>
<text transform="translate(619.5 578.7) rotate(-90)" font-size="8.2" fill="#222">15:19:26</text>
<path d="M635.8 538.7V542.3" stroke="#222" stroke-width="1"/>
<text transform="translate(638.5 578.7) rotate(-90)" font-size="8.2" fill="#222">15:19:27</text>
<path d="M654.9 538.7V542.3" stroke="#222" stroke-width="1"/>
<text transform="translate(657.6 578.7) rotate(-90)" font-size="8.2" fill="#222">15:19:27</text>
<path d="M673.9 538.7V542.3" stroke="#222" stroke-width="1"/>
<text transform="translate(676.6 578.7) rotate(-90)" font-size="8.2" fill="#222">15:19:27</text>
<path d="M692.9 538.7V542.3" stroke="#222" stroke-width="1"/>
<text transform="translate(695.6 578.7) rotate(-90)" font-size="8.2" fill="#222">15:19:27</text>
<path d="M711.9 538.7V542.3" stroke="#222" stroke-width="1"/>
<text transform="translate(714.6 578.7) rotate(-90)" font-size="8.2" fill="#222">15:19:28</text>
<path d="M730.9 538.7V542.3" stroke="#222" stroke-width="1"/>
<text transform="translate(733.6 578.7) rotate(-90)" font-size="8.2" fill="#222">15:19:28</text>
<path d="M750.0 538.7V542.3" stroke="#222" stroke-width="1"/>
<text transform="translate(752.7 578.7) rotate(-90)" font-size="8.2" fill="#222">15:19:28</text>
<path d="M769.0 538.7V542.3" stroke="#222" stroke-width="1"/>
<text transform="translate(771.7 578.7) rotate(-90)" font-size="8.2" fill="#222">15:19:28</text>
<path d="M788.0 538.7V542.3" stroke="#222" stroke-width="1"/>
<text transform="translate(790.7 578.7) rotate(-90)" font-size="8.2" fill="#222">15:19:29</text>
<path d="M217.6 538.7V542.3" stroke="#222" stroke-width="1"/>
<text x="171.5" y="326.4" font-size="8.8" fill="#2f9640">(V)</text>
<path d="M713 346H730.5" stroke="#ff0000" stroke-width="1.3"/>
<text x="735" y="349.3" font-size="8.9" fill="#222">BY1000272</text>
</svg>
</div>
</body></html>
